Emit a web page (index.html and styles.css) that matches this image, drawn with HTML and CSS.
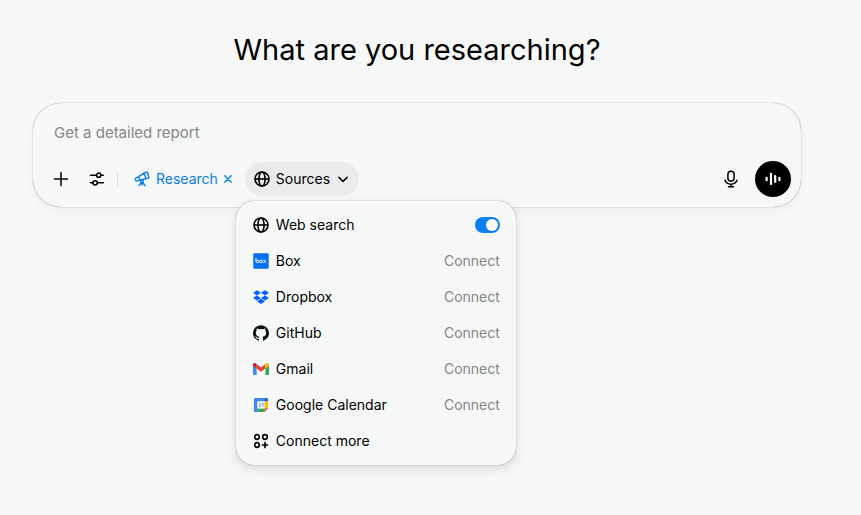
FILE: index.html
```html
<!DOCTYPE html>
<html lang="en">
<head>
    <meta charset="UTF-8">
    <meta name="viewport" content="width=device-width, initial-scale=1.0">
    <title>Research</title>
    <link rel="stylesheet" href="styles.css">
</head>
<body>
    <!-- Shared icons -->
    <svg class="sprite" aria-hidden="true">
        <symbol id="globe" viewBox="0 0 16 16">
            <g fill="none" stroke="currentColor" stroke-width="1.6">
                <circle cx="8" cy="8" r="7"/>
                <ellipse cx="8" cy="8" rx="3.1" ry="7"/>
                <path d="M1 8h14"/>
            </g>
        </symbol>
    </svg>

    <main class="page">
        <h1>What are you researching?</h1>

        <form class="composer">
            <input class="prompt" type="text" aria-label="Research prompt" placeholder="Get a detailed report">

            <div class="toolbar">
                <button type="button" class="icon-button" aria-label="Add files">
                    <svg width="16" height="16" viewBox="0 0 16 16" fill="none" stroke="currentColor" stroke-width="1.5" stroke-linecap="round"><path d="M8 1.5v13M1.5 8h13"/></svg>
                </button>
                <button type="button" class="icon-button" aria-label="Tools">
                    <svg width="16" height="16" viewBox="0 0 16 16" fill="none" stroke="currentColor" stroke-width="1.5" stroke-linecap="round"><path d="M1.5 4.2h5.7M12.1 4.2h2.2M1.5 11.8h2.2M8.6 11.8h5.7"/><circle cx="9.7" cy="4.2" r="2.1"/><circle cx="6.1" cy="11.8" r="2.1"/></svg>
                </button>
                <span class="divider"></span>
                <button type="button" class="research">
                    <svg width="16" height="16" viewBox="0 0 16 16" fill="none" stroke="currentColor" stroke-width="1.4" stroke-linecap="round" stroke-linejoin="round"><path d="M10.2 1.9l2.5-.8c.4-.1.7 0 .8.4l1.4 4.8c.1.4-.1.7-.5.8l-2.5.6zM10.2 1.9l1.7 5.8-6.2 1.4-1.1-3.4zM4.5 5.9L1.9 7.2c-.5.3-.7.8-.5 1.3l.4 1c.2.5.7.7 1.2.6l2.7-.7"/><circle cx="8" cy="10.2" r="1.4"/><path d="M7.2 11.5L5 14.7M8.8 11.5l2.2 3.2M8 11.7v2.2"/></svg>
                    <span>Research</span>
                    <svg class="close" width="8" height="8" viewBox="0 0 8 8" fill="none" stroke="currentColor" stroke-width="1.4" stroke-linecap="round"><path d="M.8.8l6.4 6.4M7.2.8L.8 7.2"/></svg>
                </button>

                <div class="sources">
                    <button type="button" class="sources-button" aria-expanded="true">
                        <svg width="16" height="16"><use href="#globe"/></svg>
                        <span>Sources</span>
                        <svg width="12" height="12" viewBox="0 0 12 12" fill="none" stroke="currentColor" stroke-width="1.5" stroke-linecap="round" stroke-linejoin="round"><path d="M1.8 4.2L6 8.4l4.2-4.2"/></svg>
                    </button>

                    <div class="menu">
                        <div class="menu-item">
                            <svg width="16" height="16"><use href="#globe"/></svg>
                            <label for="webSearch">Web search</label>
                            <input class="toggle" type="checkbox" id="webSearch" checked>
                        </div>
                        <div class="menu-item">
                            <svg width="16" height="16" viewBox="0 0 16 16"><rect x=".3" y=".3" width="15.4" height="15.4" rx="1.2" fill="#0070f3"/><g fill="none" stroke="#fff" stroke-width=".9" stroke-linecap="round"><path d="M3 5.2v3.3"/><circle cx="4.4" cy="8.4" r="1.4"/><circle cx="8" cy="8.4" r="1.4"/><path d="M10.6 7l2.2 2.8M12.8 7l-2.2 2.8"/></g></svg>
                            <span>Box</span>
                            <button type="button" class="connect">Connect</button>
                        </div>
                        <div class="menu-item">
                            <svg width="16" height="16" viewBox="0 0 16 16" fill="#0061fe"><path d="M4 1.3l4 2.5-4 2.6-4-2.6zM12 1.3l4 2.5-4 2.6-4-2.6zM4 6.4l4 2.5-4 2.6-4-2.6zM12 6.4l4 2.5-4 2.6-4-2.6zM4 12.3l4-2.5 4 2.5-4 2.6z"/></svg>
                            <span>Dropbox</span>
                            <button type="button" class="connect">Connect</button>
                        </div>
                        <div class="menu-item">
                            <svg width="16" height="16" viewBox="0 0 16 16" fill="#0d1117"><path d="M8 .2a8 8 0 0 0-2.5 15.6c.4.1.5-.2.5-.4v-1.5c-2.2.5-2.7-.9-2.7-.9-.4-.9-.9-1.2-.9-1.2-.7-.5.1-.5.1-.5.8.1 1.2.8 1.2.8.7 1.2 1.9.9 2.3.7.1-.5.3-.9.5-1.1-1.8-.2-3.6-.9-3.6-4 0-.8.3-1.6.8-2.1-.1-.2-.4-1 .1-2.1 0 0 .7-.2 2.2.8a7.6 7.6 0 0 1 4 0c1.5-1 2.2-.8 2.2-.8.4 1.1.2 1.9.1 2.1.5.6.8 1.3.8 2.1 0 3.1-1.9 3.7-3.7 3.9.3.3.6.8.6 1.5v2.3c0 .2.1.5.5.4A8 8 0 0 0 8 .2z"/></svg>
                            <span>GitHub</span>
                            <button type="button" class="connect">Connect</button>
                        </div>
                        <div class="menu-item">
                            <svg width="16" height="16" viewBox="0 0 16 16"><path d="M0 4.2l3.6 2.7V14H1.1A1.1 1.1 0 0 1 0 12.9z" fill="#4285f4"/><path d="M16 4.2l-3.6 2.7V14h2.5a1.1 1.1 0 0 0 1.1-1.1z" fill="#34a853"/><path d="M3.6 3.1L8 6.4l4.4-3.3v4.4L8 10.8 3.6 7.5z" fill="#ea4335"/><path d="M0 3.7C0 2.3 1.6 1.5 2.7 2.4l.9.7v4.4L0 4.8z" fill="#c5221f"/><path d="M16 3.7c0-1.4-1.6-2.2-2.7-1.3l-.9.7v4.4L16 4.8z" fill="#fbbc04"/></svg>
                            <span>Gmail</span>
                            <button type="button" class="connect">Connect</button>
                        </div>
                        <div class="menu-item">
                            <svg width="16" height="16" viewBox="0 0 16 16"><path d="M2.2 1H12v3.5H4.5V15H2.2A1.2 1.2 0 0 1 1 13.8V2.2A1.2 1.2 0 0 1 2.2 1z" fill="#4285f4"/><path d="M4.5 4.5h7.2v7.2H4.5z" fill="#fff"/><path d="M11.6 1h2.2A1.2 1.2 0 0 1 15 2.2v2.3h-3.4z" fill="#1967d2"/><path d="M11.6 4.5H15v7.1h-3.4z" fill="#fbbc04"/><path d="M4.5 11.6h7.1V15H4.5z" fill="#34a853"/><path d="M1 11.6h3.5V15H2.2A1.2 1.2 0 0 1 1 13.8z" fill="#4285f4"/><path d="M11.6 11.6H15L11.6 15z" fill="#ea4335"/><path d="M5.7 6.2c1.8-.7 2.5 1.4.8 1.7 2 .1 1.3 2.5-.8 1.7M8.9 6.6l1.1-.7v4.2" fill="none" stroke="#4285f4" stroke-width=".9"/></svg>
                            <span>Google Calendar</span>
                            <button type="button" class="connect">Connect</button>
                        </div>
                        <button type="button" class="menu-item">
                            <svg width="16" height="16" viewBox="0 0 16 16" fill="none" stroke="currentColor" stroke-width="1.7" stroke-linecap="round"><circle cx="4" cy="4" r="2.3"/><circle cx="12" cy="4" r="2.3"/><circle cx="4" cy="12" r="2.3"/><path d="M12 9.5v5M9.5 12h5"/></svg>
                            <span>Connect more</span>
                        </button>
                    </div>
                </div>

                <div class="voice-actions">
                    <button type="button" class="icon-button" aria-label="Dictate">
                        <svg width="18" height="18" viewBox="0 0 18 18" fill="none" stroke="currentColor" stroke-width="1.5" stroke-linecap="round"><rect x="5.9" y="1.2" width="6.2" height="10" rx="3.1"/><path d="M3 10.3c1 2.5 3.2 3.9 6 3.9s5-1.4 6-3.9M9 14.2v2.5M6.5 16.7h5"/></svg>
                    </button>
                    <button type="button" class="icon-button voice" aria-label="Use voice mode">
                        <svg width="18" height="18" viewBox="0 0 18 18" fill="none" stroke="currentColor" stroke-width="2.2" stroke-linecap="round"><path d="M2.6 7.8v2.4M7 3.9v10.2M11.2 6v6M15.4 7.8v2.4"/></svg>
                    </button>
                </div>
            </div>
        </form>
    </main>
</body>
</html>
```
FILE: styles.css
```css
* {
    box-sizing: border-box;
}
body {
    margin: 0;
    background-color: #f6f8f7;
    color: #000;
    font-family: Inter, Arial, sans-serif;
    font-size: 14px;
    line-height: 20px;
}
.sprite {
    display: none;
}
.page {
    max-width: 861px;
    min-height: 100vh;
    padding: 32px 60px 32px 33px;
}
h1 {
    margin: 0 0 35px;
    font-size: 29px;
    line-height: 36px;
    font-weight: 400;
    text-align: center;
}
button {
    margin: 0;
    padding: 0;
    border: none;
    background: none;
    color: inherit;
    font: inherit;
    cursor: pointer;
}
svg {
    flex: none;
    display: block;
}
.composer {
    padding: 10px;
    border-radius: 28px;
    box-shadow: 0 0 1px rgba(0,0,0,0.6), 0 4px 8px rgba(0,0,0,0.04);
}
.prompt {
    display: block;
    width: 100%;
    height: 38px;
    margin-bottom: 10px;
    padding: 0 11px;
    border: none;
    outline: none;
    background: none;
    color: inherit;
    font-family: inherit;
    font-size: 15px;
}
.prompt::placeholder {
    color: #858585;
    opacity: 1;
}
.toolbar {
    display: flex;
    align-items: center;
}
.icon-button {
    display: flex;
    align-items: center;
    justify-content: center;
    width: 36px;
    height: 36px;
    border-radius: 50%;
}
.divider {
    width: 1px;
    height: 14px;
    margin: 0 8px 0 2px;
    background-color: #dcdedd;
}
.research {
    display: flex;
    align-items: center;
    gap: 6px;
    height: 34px;
    padding: 0 13px 0 8px;
    color: #0b7cec;
}
.sources {
    position: relative;
}
.sources-button {
    display: flex;
    align-items: center;
    gap: 6px;
    height: 34px;
    padding: 0 10px 0 9px;
    border-radius: 17px;
    background-color: #ebebeb;
}
.sources-button span {
    margin-right: 1px;
}
.menu {
    position: absolute;
    top: 39px;
    left: -9px;
    width: 280px;
    padding: 6px;
    border-radius: 18px;
    background-color: #f6f8f7;
    box-shadow: 0 0 1px rgba(0,0,0,0.6), 0 4px 12px rgba(0,0,0,0.12);
}
.menu-item {
    display: flex;
    align-items: center;
    gap: 7px;
    width: 100%;
    height: 36px;
    padding: 0 10px 0 11px;
}
.connect, .toggle {
    margin-left: auto;
}
.connect {
    color: #858585;
}
.toggle {
    appearance: none;
    display: flex;
    align-items: center;
    width: 25px;
    height: 16px;
    margin-top: 0;
    margin-right: 0;
    margin-bottom: 0;
    padding: 2px;
    border-radius: 8px;
    background-color: #c4c6c5;
    cursor: pointer;
}
.toggle::before {
    content: "";
    width: 12px;
    height: 12px;
    border-radius: 50%;
    background-color: #fff;
}
.toggle:checked {
    justify-content: flex-end;
    background-color: #0b7ff5;
}
.voice-actions {
    display: flex;
    gap: 6px;
    margin-left: auto;
}
.voice {
    background-color: #000;
    color: #fff;
}
```
